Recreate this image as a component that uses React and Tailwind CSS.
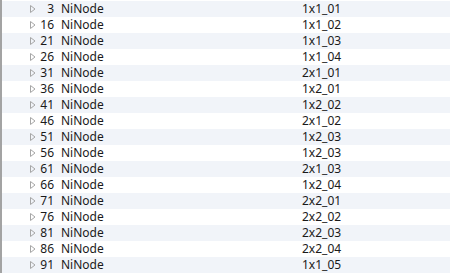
const rows = [
  [3, "1x1_01"], [16, "1x1_02"], [21, "1x1_03"], [26, "1x1_04"], [31, "2x1_01"],
  [36, "1x2_01"], [41, "1x2_02"], [46, "2x1_02"], [51, "1x2_03"], [56, "1x2_03"],
  [61, "2x1_03"], [66, "1x2_04"], [71, "2x2_01"], [76, "2x2_02"], [81, "2x2_03"],
  [86, "2x2_04"], [91, "1x1_05"],
];

export default function App() {
  return (
    <div className="w-[450px] h-[273px] overflow-hidden bg-white border-l-2 border-[#a3a3a3] flex flex-col pt-px text-[12px] text-[#1a1a1a]" style={{ fontFamily: '"Noto Sans", "Open Sans", sans-serif' }}>
      {rows.map(([n, name], i) => (
        <div key={i} className={`h-4 shrink-0 flex items-center ${i % 2 === 0 ? "bg-[#f1f4f9]" : "bg-white"}`}>
          <div className="w-[28px] shrink-0" />
          <svg width="6" height="8" viewBox="0 0 6 8" className="shrink-0">
            <path d="M0.5 0.5 L5 4 L0.5 7.5 Z" fill="none" stroke="#a6a6a6" strokeWidth="1" />
          </svg>
          <div className="w-[18px] shrink-0 text-right leading-4">{n}</div>
          <div className="w-[248px] shrink-0 pl-[7px] leading-4">NiNode</div>
          <div className="leading-4">{name}</div>
        </div>
      ))}
    </div>
  );
}
